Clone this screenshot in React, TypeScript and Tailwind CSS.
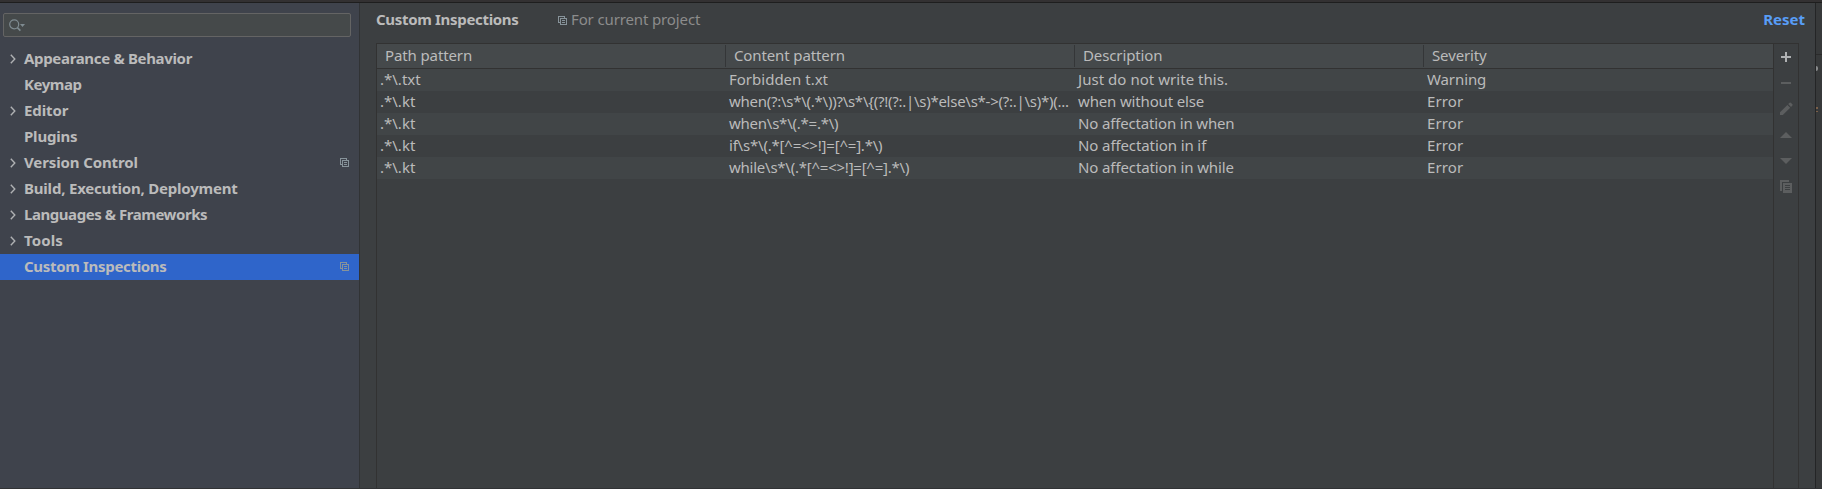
import React from "react";

type TreeItem = {
  label: string;
  tracking: string;
  expandable?: boolean;
  project?: boolean;
  selected?: boolean;
};

const tree: TreeItem[] = [
  { label: "Appearance & Behavior", expandable: true, tracking: "tracking-[-0.33px]" },
  { label: "Keymap", tracking: "tracking-[-0.45px]" },
  { label: "Editor", expandable: true, tracking: "tracking-[-0.1px]" },
  { label: "Plugins", tracking: "tracking-[-0.2px]" },
  { label: "Version Control", expandable: true, project: true, tracking: "tracking-[-0.12px]" },
  { label: "Build, Execution, Deployment", expandable: true, tracking: "tracking-[-0.2px]" },
  { label: "Languages & Frameworks", expandable: true, tracking: "tracking-[-0.45px]" },
  { label: "Tools", expandable: true, tracking: "tracking-[0.1px]" },
  { label: "Custom Inspections", project: true, selected: true, tracking: "tracking-[-0.32px]" },
];

const headers = ["Path pattern", "Content pattern", "Description", "Severity"];

type Cell = [text: string, tracking: string];

const rows: Cell[][] = [
  [
    [".*\\.txt", "tracking-[0px]"],
    ["Forbidden t.xt", "tracking-[0px]"],
    ["Just do not write this.", "tracking-[0.04px]"],
    ["Warning", "tracking-[-0.1px]"],
  ],
  [
    [".*\\.kt", "tracking-[0px]"],
    ["when(?:\\s*\\(.*\\))?\\s*\\{(?!(?:.|\\s)*else\\s*->(?:.|\\s)*)(...", "tracking-[-0.26px]"],
    ["when without else", "tracking-[-0.15px]"],
    ["Error", "tracking-[0.1px]"],
  ],
  [
    [".*\\.kt", "tracking-[0px]"],
    ["when\\s*\\(.*=.*\\)", "tracking-[-0.24px]"],
    ["No affectation in when", "tracking-[-0.16px]"],
    ["Error", "tracking-[0.1px]"],
  ],
  [
    [".*\\.kt", "tracking-[0px]"],
    ["if\\s*\\(.*[^=<>!]=[^=].*\\)", "tracking-[-0.21px]"],
    ["No affectation in if", "tracking-[-0.1px]"],
    ["Error", "tracking-[0.1px]"],
  ],
  [
    [".*\\.kt", "tracking-[0px]"],
    ["while\\s*\\(.*[^=<>!]=[^=].*\\)", "tracking-[-0.24px]"],
    ["No affectation in while", "tracking-[-0.11px]"],
    ["Error", "tracking-[0.1px]"],
  ],
];

function ProjectIcon() {
  return (
    <svg className="block" width="10" height="10" viewBox="0 0 10 10" fill="#87939a" shapeRendering="crispEdges">
      <path d="M0 0H7V1H1V6H0ZM0 6H2V7H0ZM6 1H7V2H6Z" />
      <path fillRule="evenodd" d="M2 2H9V9H2ZM3 3V8H8V3Z" />
      <path d="M4 4H7V5H4ZM4 6H7V7H4Z" />
    </svg>
  );
}

function Chevron() {
  return (
    <svg width="6" height="10" viewBox="0 0 6 10" fill="none" stroke="#afb1b3" strokeWidth="1.4">
      <path d="M.8 .8L4.8 5L.8 9.2" />
    </svg>
  );
}

function SearchIcon() {
  return (
    <svg width="17" height="13" viewBox="0 0 17 13" fill="none">
      <circle cx="5.2" cy="5.3" r="4.5" stroke="#7f8b91" strokeWidth="1.2" />
      <path d="M8.4 8.6L11.4 11.6" stroke="#7f8b91" strokeWidth="1.6" />
      <path d="M11 5H16L13.5 8Z" fill="#7f8b91" />
    </svg>
  );
}

function Tool({ children, color }: { children: React.ReactNode; color: string }) {
  return (
    <div className="flex h-[26px] w-6 items-center justify-center">
      <svg width="14" height="14" viewBox="0 0 14 14" fill={color}>
        {children}
      </svg>
    </div>
  );
}

function Toolbar() {
  return (
    <div className="w-[26px] shrink-0 border-x border-[#323232]">
      <Tool color="#afb1b3">
        <path d="M6 2H8V6H12V8H8V12H6V8H2V6H6Z" />
      </Tool>
      <Tool color="#5c5e5f">
        <path d="M2 6H12V8H2Z" />
      </Tool>
      <Tool color="#5c5e5f">
        <path d="M1 10.3L8.4 2.9L11.2 5.7L3.8 13.1H1ZM9.2 2.1L10.6 .7Q11.2 .2 11.8 .7L13.4 2.3Q13.9 2.9 13.4 3.5L12 4.9Z" />
      </Tool>
      <Tool color="#5c5e5f">
        <path d="M1 10L7 4L13 10Z" />
      </Tool>
      <Tool color="#5c5e5f">
        <path d="M1 4H13L7 10Z" />
      </Tool>
      <Tool color="#5c5e5f">
        <path d="M1 0H10V2H3V11H1Z" />
        <path fillRule="evenodd" d="M4 3H13V13H4ZM6 5V6H11V5ZM6 7V8H11V7ZM6 9V10H11V9Z" />
      </Tool>
    </div>
  );
}

function Sidebar() {
  return (
    <div className="w-[360px] shrink-0 border-r border-[#313335] bg-[#3f434c] pt-[10px]">
      <div className="ml-[3px] flex h-6 w-[348px] items-center rounded-[2px] border border-[#646464] bg-[#45494a] pl-[5px]">
        <SearchIcon />
      </div>
      <div className="pt-[9px]">
        {tree.map((item) => (
          <div
            key={item.label}
            className={
              "flex h-[26px] items-center whitespace-nowrap pl-[10px] font-bold " +
              (item.selected ? "bg-[#2f65ca]" : "")
            }
          >
            <span className="flex w-[14px] shrink-0 items-center">{item.expandable && <Chevron />}</span>
            <span className={"pb-[2px] leading-[22px] " + item.tracking}>{item.label}</span>
            {item.project && (
              <span className="ml-auto mr-[9px]">
                <ProjectIcon />
              </span>
            )}
          </div>
        ))}
      </div>
    </div>
  );
}

function Table() {
  return (
    <div className="min-w-0 flex-1 border-l border-[#323232]">
      <div className="grid h-[25px] grid-cols-[349px_349px_349px_349px] items-center border-b border-[#323232] bg-[#45494b]">
        {headers.map((h, i) => (
          <div
            key={h}
            className={
              "flex h-[22px] items-center pb-[2px] pl-2 tracking-[-0.12px] " +
              (i < headers.length - 1 ? "border-r border-[#343638]" : "")
            }
          >
            {h}
          </div>
        ))}
      </div>
      {rows.map((row, r) => (
        <div
          key={r}
          className={
            "grid h-[22px] grid-cols-[349px_349px_349px_349px] items-start " +
            (r % 2 === 0 ? "bg-[#414547]" : "")
          }
        >
          {row.map(([text, tracking], c) => (
            <div key={c} className={"whitespace-nowrap pl-[3px] leading-[20px] " + tracking}>
              {text}
            </div>
          ))}
        </div>
      ))}
    </div>
  );
}

export default function App() {
  return (
    <div className="flex h-[489px] w-[1822px] flex-col overflow-hidden bg-[#3c3f41] font-['Noto_Sans',sans-serif] text-[15px] text-[#bbbbbb]">
      <div className="h-[3px] shrink-0 border-b border-[#1e1e1e] bg-[#333132]" />
      <div className="flex min-h-0 flex-1">
        <Sidebar />
        <div className="flex min-w-0 flex-1 flex-col pl-4">
          <div className="flex h-10 items-start pt-[4px] leading-[24px]">
            <span className="w-[182px] font-bold tracking-[-0.32px]">Custom Inspections</span>
            <span className="mt-[9px]">
              <ProjectIcon />
            </span>
            <span className="ml-[3px] tracking-[-0.13px] text-[#8c8c8c]">For current project</span>
            <span className="ml-auto mr-[10px] font-bold text-[#589df6]">Reset</span>
          </div>
          <div className="mr-4 flex min-h-0 flex-1 border-t border-[#323232]">
            <Table />
            <Toolbar />
          </div>
        </div>
        <div className="w-[7px] shrink-0 border-l border-[#242526] bg-[#37393a]">
          <div className="h-[52px] border-b border-[#2b2b2b]" />
          <div className="mt-[11px] h-[5px] w-[2px] rounded-r bg-[#8a8c8d]" />
          <div className="mt-[36px] h-[2px] w-[2px] bg-[#7a5f49]" />
          <div className="mt-[2px] h-px w-[2px] bg-[#7a5f49]" />
        </div>
      </div>
      <div className="h-px shrink-0 bg-[#313335]" />
    </div>
  );
}
